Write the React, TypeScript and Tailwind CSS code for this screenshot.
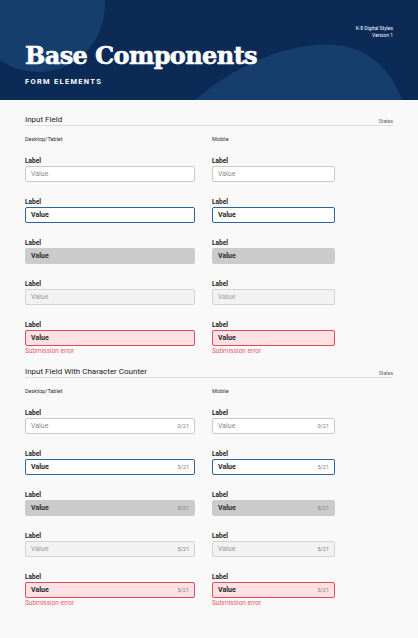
import React from 'react';

type State = 'default' | 'focus' | 'disabled' | 'readonly' | 'error';

const states: State[] = ['default', 'focus', 'disabled', 'readonly', 'error'];

const boxStyles: Record<State, string> = {
  default: 'bg-white border-[#c9c9c9] text-[#8a8a8a] font-normal',
  focus: 'bg-white border-[#2d6597] text-[#1e1e1e] font-bold',
  disabled: 'bg-[#cbcbcb] border-[#cbcbcb] text-[#2a2a2a] font-bold',
  readonly: 'bg-[#f2f2f2] border-[#d3d3d3] text-[#9a9a9a] font-normal',
  error: 'bg-[#ffe1e4] border-[#de4b5c] text-[#1e1e1e] font-bold',
};

function Field({ state, counter }: { state: State; counter: boolean }) {
  const count = state === 'default' ? '0/21' : '5/21';
  return (
    <div className="flex flex-col">
      <div className="text-[6.5px] leading-[8px] font-bold text-[#222]">Label</div>
      <div
        className={`mt-[1px] h-[16px] border rounded-[2px] flex items-center justify-between pl-[5px] pr-[5px] text-[7px] ${boxStyles[state]}`}
      >
        <span>Value</span>
        {counter && <span className="text-[5.5px] font-normal text-[#7a7a7a]">{count}</span>}
      </div>
      {state === 'error' && (
        <div className="mt-[1px] text-[6.5px] leading-[8px] text-[#e5586b]">Submission error</div>
      )}
    </div>
  );
}

function Column({ title, counter }: { title: string; counter: boolean }) {
  return (
    <div className="flex flex-col">
      <div className="text-[5.5px] leading-[7px] text-[#333]">{title}</div>
      <div className="mt-[14px] flex flex-col gap-[16px]">
        {states.map((s) => (
          <Field key={s} state={s} counter={counter} />
        ))}
      </div>
    </div>
  );
}

function Section({ title, counter }: { title: string; counter: boolean }) {
  return (
    <section>
      <div className="flex items-end justify-between border-b border-[#dedede]">
        <span className="text-[8px] leading-[10px] text-[#222]">{title}</span>
        <span className="text-[5px] leading-[8px] text-[#666]">States</span>
      </div>
      <div className="mt-[10px] grid grid-cols-[170px_123px] gap-x-[17px]">
        <Column title="Desktop/Tablet" counter={counter} />
        <Column title="Mobile" counter={counter} />
      </div>
    </section>
  );
}

export default function App() {
  return (
    <div className="min-h-[638px] bg-[#f9f9f9]" style={{ fontFamily: 'Roboto, "Liberation Sans", sans-serif' }}>
      <header className="relative h-[100px] bg-[#0c2a56] overflow-hidden">
        <svg className="absolute inset-0" width="418" height="100" viewBox="0 0 418 100">
          <circle cx="38" cy="5" r="67" fill="#163e6c" />
          <path d="M195,100 C240,62 290,42 335,45 C375,48 394,78 402,100 Z" fill="#163e6c" />
        </svg>
        <div className="relative flex flex-col h-full px-[25px]">
          <div className="pt-[25px] self-end text-right text-[5px] leading-[7px] text-white">
            <div>K-8 Digital Styles</div>
            <div>Version 1</div>
          </div>
          <h1
            className="mt-[3px] text-[24px] leading-[28px] font-bold text-white tracking-[-0.6px]"
            style={{ fontFamily: '"DejaVu Serif", serif', WebkitTextStroke: '0.6px white' }}
          >
            Base Components
          </h1>
          <div className="mt-[7px] text-[7.5px] leading-[9px] font-bold tracking-[1.3px] text-white">
            FORM ELEMENTS
          </div>
        </div>
      </header>
      <main className="px-[25px] pt-[15px] flex flex-col gap-[12px]">
        <Section title="Input Field" counter={false} />
        <Section title="Input Field With Character Counter" counter={true} />
      </main>
    </div>
  );
}
